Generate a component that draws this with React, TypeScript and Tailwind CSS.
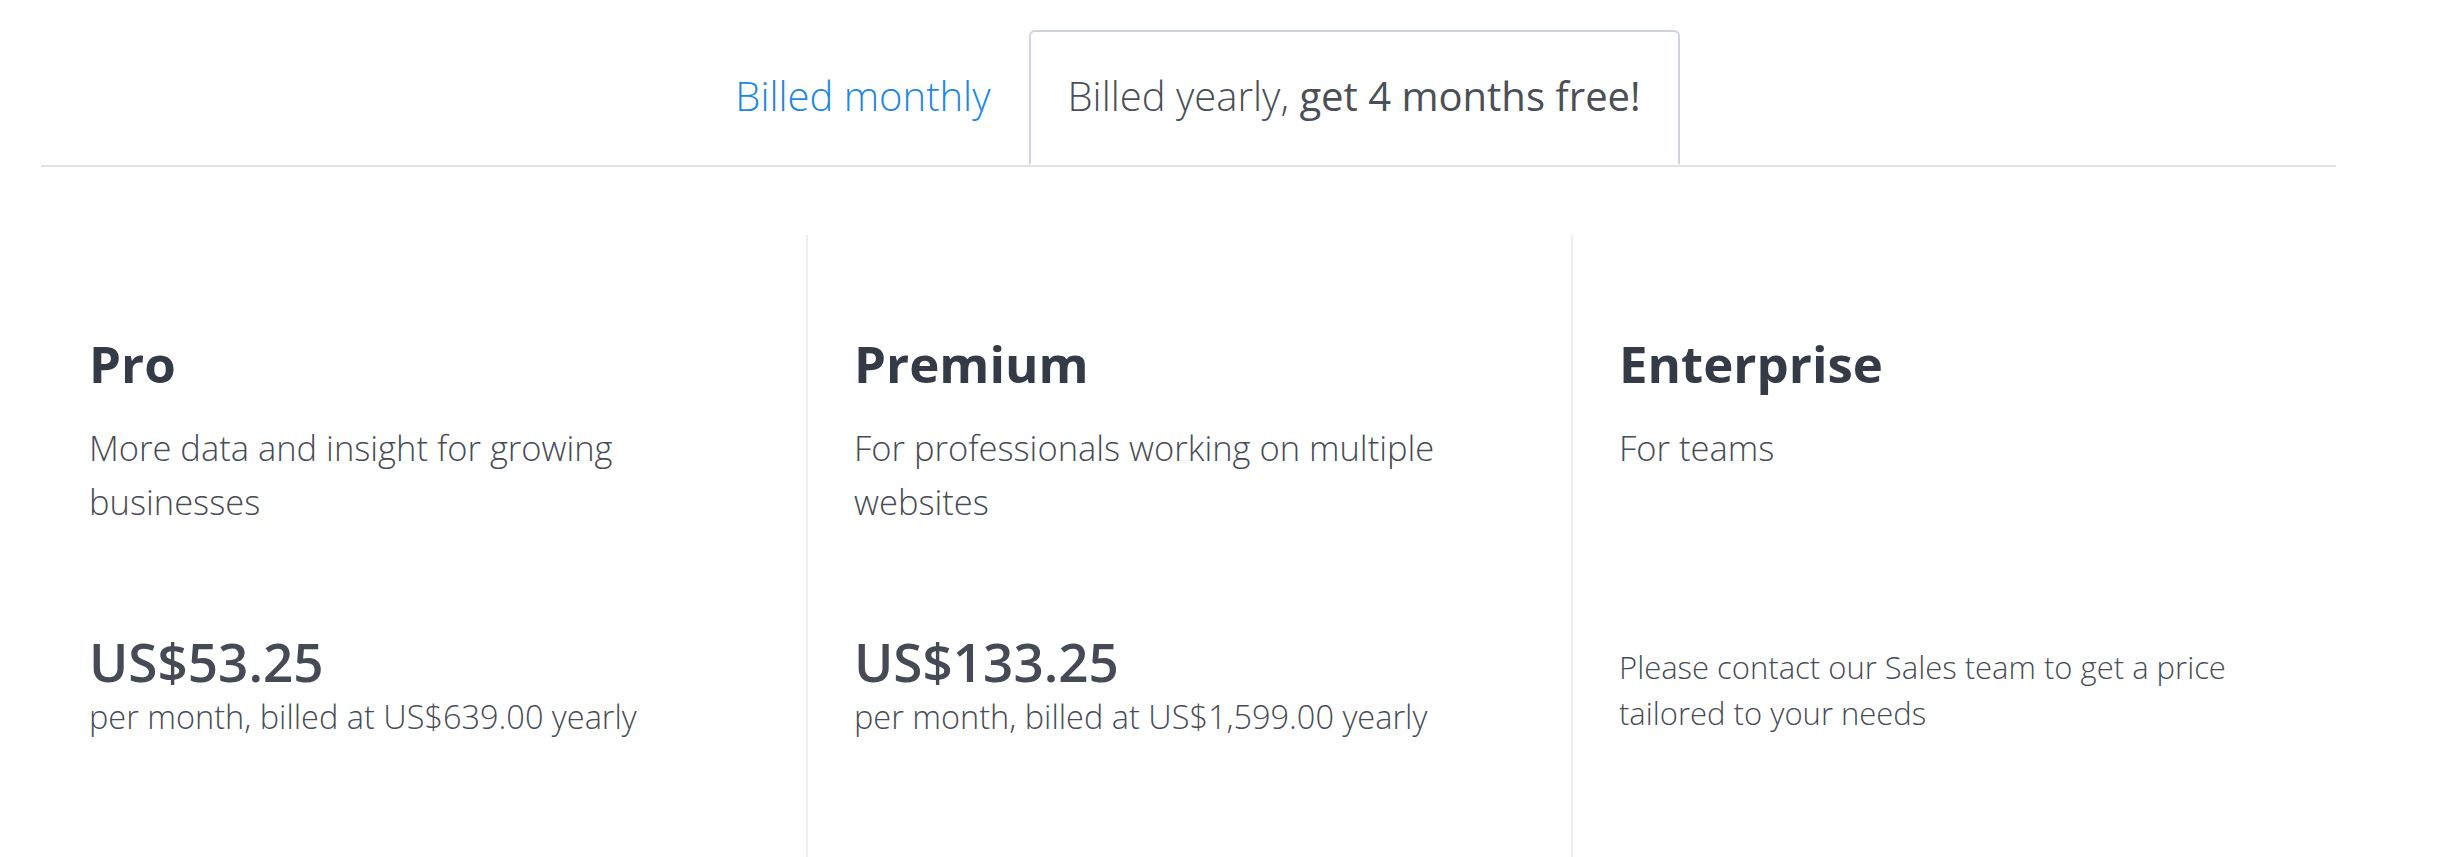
import React, { useState } from 'react';

type Plan = {
  name: string;
  description: string;
  price?: string;
  note: string;
};

const plans: Plan[] = [
  {
    name: 'Pro',
    description: 'More data and insight for growing businesses',
    price: 'US$53.25',
    note: 'per month, billed at US$639.00 yearly',
  },
  {
    name: 'Premium',
    description: 'For professionals working on multiple websites',
    price: 'US$133.25',
    note: 'per month, billed at US$1,599.00 yearly',
  },
  {
    name: 'Enterprise',
    description: 'For teams',
    note: 'Please contact our Sales team to get a price tailored to your needs',
  },
];

export default function App() {
  const [billing, setBilling] = useState<'monthly' | 'yearly'>('yearly');

  return (
    <div className="min-h-screen bg-white pt-[30px] font-['Open_Sans',_'Noto_Sans',_sans-serif] text-[#474c56]">
      <div className="ml-[41px] w-[2295px]">
        {/* billing switch */}
        <div className="flex justify-center border-b-2 border-[#dfe3e8]">
          <button
            onClick={() => setBilling('monthly')}
            className={`h-[135px] px-[38px] pb-[4px] text-[40px] leading-[60px] font-light ${
              billing === 'monthly'
                ? '-mb-[2px] rounded-t-[6px] border-2 border-[#cfd4dc] border-b-white bg-white text-[#4a4f58]'
                : 'text-[#1e87e5]'
            }`}
          >
            Billed monthly
          </button>
          <button
            onClick={() => setBilling('yearly')}
            className={`h-[135px] px-[37px] pb-[4px] text-[40px] leading-[60px] font-light ${
              billing === 'yearly'
                ? '-mb-[2px] rounded-t-[6px] border-2 border-[#cfd4dc] border-b-white bg-white text-[#4a4f58]'
                : 'text-[#1e87e5]'
            }`}
          >
            Billed yearly, <span className="font-normal">get 4 months free!</span>
          </button>
        </div>

        {/* plans */}
        <div className="mt-[68px] grid grid-cols-3">
          {plans.map((plan, i) => (
            <div
              key={plan.name}
              className={`min-h-[640px] pt-[96px] ${i === 0 ? 'pl-[48px]' : 'border-l-2 border-[#eceef1] pl-[46px]'} pr-[48px]`}
            >
              <h2 className="text-[51px] leading-[65px] font-bold text-[#353a47]">{plan.name}</h2>
              <p className="mt-[25px] min-h-[108px] text-[34.5px] leading-[54px] font-light text-[#474c56]">
                {plan.description}
              </p>
              {plan.price ? (
                <div className="mt-[101px]">
                  <div className="text-[53px] leading-[64px] font-semibold text-[#454a55]">{plan.price}</div>
                  <div className="text-[32.5px] leading-[45px] font-light text-[#474c56]">{plan.note}</div>
                </div>
              ) : (
                <p className="mt-[115px] max-w-[640px] text-[31px] leading-[46px] font-light text-[#474c56]">
                  {plan.note}
                </p>
              )}
            </div>
          ))}
        </div>
      </div>
    </div>
  );
}
